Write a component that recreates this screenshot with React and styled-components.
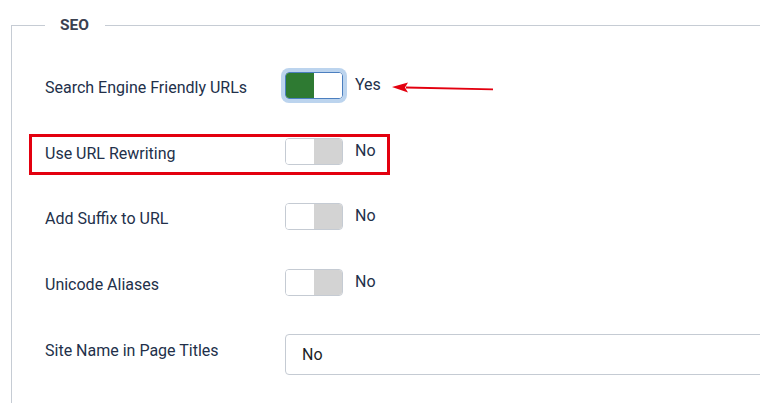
import React from "react";
import styled, { createGlobalStyle } from "styled-components";

const Global = createGlobalStyle`
  html, body { margin: 0; padding: 0; background: #fff; overflow: hidden; }
  body { font-family: Roboto, "Liberation Sans", sans-serif; }
`;

const Page = styled.div`
  width: 760px;
  height: 403px;
  overflow: hidden;
  padding: 16px 0 0 11px;
  box-sizing: border-box;
`;

const Fieldset = styled.fieldset`
  margin: 0;
  width: 900px;
  min-height: 420px;
  box-sizing: border-box;
  border: 1px solid #c6ccd4;
  border-radius: 0;
  padding: 38px 0 0 33px;
`;

const Legend = styled.legend`
  padding: 0 16px 0 15px;
  font-size: 15.5px;
  font-weight: 700;
  color: #3b4150;
  line-height: 18px;
`;

const Rows = styled.div`
  display: flex;
  flex-direction: column;
  gap: 38.5px;
`;

const Row = styled.div`
  position: relative;
  display: flex;
  align-items: flex-start;
`;

const Label = styled.div`
  width: 240px;
  flex: none;
  padding-top: ${(p) => p.$pt || 5}px;
  font-size: 16px;
  line-height: 22px;
  color: #22304a;
`;

const Control = styled.div`
  display: flex;
  align-items: center;
  height: 27px;
`;

const Toggle = styled.div`
  display: flex;
  width: 58px;
  height: 27px;
  box-sizing: border-box;
  border: 1px solid ${(p) => (p.$focus ? "#4c7fbf" : "#c5cbd3")};
  border-radius: 4px;
  overflow: hidden;
  box-shadow: ${(p) => (p.$focus ? "0 0 0 4px #bcd4ee" : "none")};
`;

const Half = styled.span`
  flex: 1;
  background: ${(p) => p.$bg};
`;

const StateText = styled.span`
  margin-left: 12px;
  font-size: 16px;
  color: #22304a;
  position: relative;
  top: -1px;
`;

const Select = styled.div`
  width: 520px;
  height: 41px;
  box-sizing: border-box;
  border: 1px solid #c5cbd3;
  border-radius: 4px;
  display: flex;
  align-items: center;
  padding-left: 16px;
  font-size: 16px;
  color: #1c1f26;
`;

const Highlight = styled.div`
  position: absolute;
  left: -16px;
  top: -4px;
  width: 361px;
  height: 41px;
  box-sizing: border-box;
  border: 3px solid #e3000f;
  pointer-events: none;
`;

const Arrow = styled.svg`
  margin-left: 11px;
  margin-top: 4px;
  display: block;
`;

function Switch({ on, focus }) {
  return (
    <Toggle $focus={focus}>
      <Half $bg={on ? "#2e7a32" : "#ffffff"} />
      <Half $bg={on ? "#ffffff" : "#d3d3d3"} />
    </Toggle>
  );
}

export default function App() {
  return (
    <Page>
      <Global />
      <Fieldset>
        <Legend>SEO</Legend>
        <Rows>
          <Row>
            <Label>Search Engine Friendly URLs</Label>
            <Control>
              <Switch on focus />
              <StateText>Yes</StateText>
              <Arrow width="102" height="12" viewBox="0 0 102 12">
                <path d="M14 4.6 L101 6.4 L101 8.2 L14 6.6 Z" fill="#e3000f" />
                <path d="M0 5 L16 0.5 L13 5.4 L16 10.5 Z" fill="#e3000f" />
              </Arrow>
            </Control>
          </Row>
          <Row>
            <Highlight />
            <Label>Use URL Rewriting</Label>
            <Control>
              <Switch />
              <StateText>No</StateText>
            </Control>
          </Row>
          <Row>
            <Label>Add Suffix to URL</Label>
            <Control>
              <Switch />
              <StateText>No</StateText>
            </Control>
          </Row>
          <Row>
            <Label>Unicode Aliases</Label>
            <Control>
              <Switch />
              <StateText>No</StateText>
            </Control>
          </Row>
          <Row>
            <Label $pt={6}>Site Name in Page Titles</Label>
            <Select>No</Select>
          </Row>
        </Rows>
      </Fieldset>
    </Page>
  );
}
